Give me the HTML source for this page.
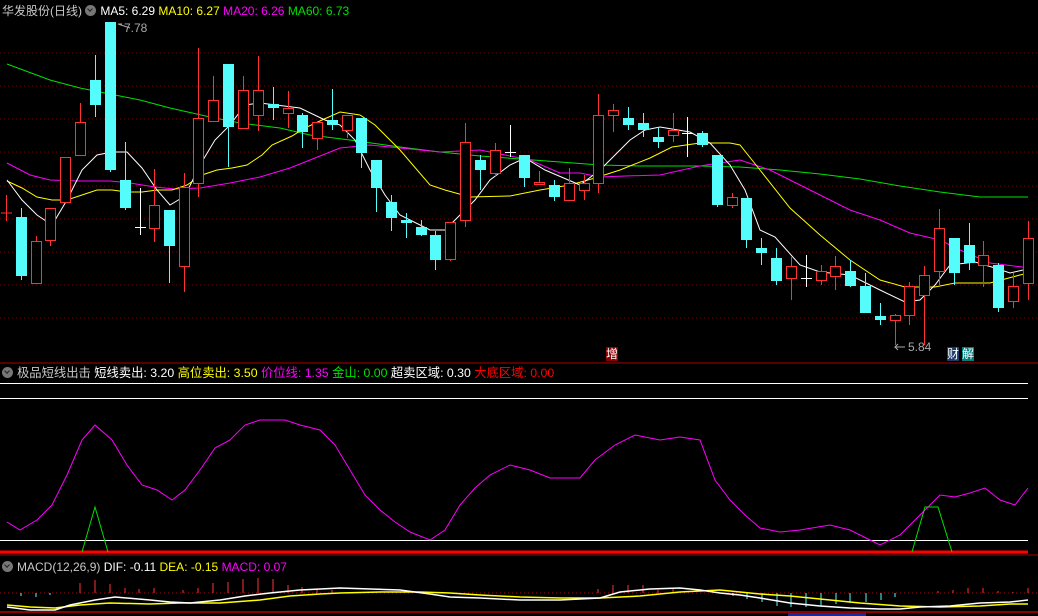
<!DOCTYPE html>
<html><head><meta charset="utf-8"><style>
html,body{margin:0;padding:0;background:#000;}
body{width:1038px;height:616px;overflow:hidden;position:relative;font-family:"Liberation Sans","Noto Sans CJK SC",sans-serif;}
.t{position:absolute;font-size:12px;line-height:14px;white-space:nowrap;}
.ic{display:inline-block;width:11px;height:11px;border-radius:50%;background:#777;vertical-align:-1px;margin-right:4px;position:relative}
.ic:after{content:"";position:absolute;left:3px;top:2px;width:3px;height:3px;border-right:1.5px solid #222;border-bottom:1.5px solid #222;transform:rotate(45deg)}
</style></head><body>
<svg width="1038" height="616" style="position:absolute;left:0;top:0" xmlns="http://www.w3.org/2000/svg">
<g stroke="#7a0000" stroke-dasharray="1,3" stroke-width="1">
<line x1="0" y1="53" x2="1038" y2="53"/><line x1="0" y1="86" x2="1038" y2="86"/><line x1="0" y1="119" x2="1038" y2="119"/><line x1="0" y1="152" x2="1038" y2="152"/><line x1="0" y1="186" x2="1038" y2="186"/><line x1="0" y1="219" x2="1038" y2="219"/><line x1="0" y1="252" x2="1038" y2="252"/><line x1="0" y1="285" x2="1038" y2="285"/><line x1="0" y1="318" x2="1038" y2="318"/>
<line x1="0" y1="593" x2="1038" y2="593" stroke="#b00000"/>
</g>
<line x1="0" y1="363" x2="1038" y2="363" stroke="#b00000"/>
<line x1="0" y1="555" x2="1038" y2="555" stroke="#b00000"/>
<line x1="0" y1="612" x2="1038" y2="612" stroke="#c00000" stroke-width="1.5"/>
<g fill="none" stroke-width="1">
<polyline stroke="#00e000" points="7,64 50,80 80,88 140,100 170,108 210,117 240,123 280,128 310,135 350,140 400,147 440,152 480,156 520,159 560,162 600,165 640,166 700,166 740,167 780,170 820,174 860,179 900,186 940,192 980,197 1028,197"/>
<polyline stroke="#ff00ff" points="7,163 30,175 50,180 80,181 110,181 130,183 155,187 175,189 200,188 230,183 260,177 290,168 310,160 340,148 370,145 420,150 440,152 480,150 530,160 560,173 580,173 600,177 625,176 660,175 700,166 740,160 770,170 800,185 830,200 850,210 880,220 910,233 940,240 960,250 990,263 1030,268"/>
<polyline stroke="#ffff00" points="7,181 22,188 37,197 52,200 67,200 82,195 97,190 112,190 127,192 142,192 157,190 172,190 187,185 202,175 217,170 232,168 247,165 262,155 272,145 292,136 305,128 322,120 340,112 360,115 375,125 400,150 430,185 445,190 470,197 510,196 540,190 570,185 595,178 620,170 650,158 672,147 700,143 730,143 740,145 760,170 790,208 820,235 850,260 880,280 905,287 935,287 955,283 990,283 1020,275 1028,273"/>
<polyline stroke="#ffffff" points="7,180 22,200 37,215 52,225 67,200 82,170 97,155 112,152 127,152 142,168 157,190 170,205 185,196 200,165 215,140 230,125 245,105 260,103 300,108 325,120 340,125 355,140 370,170 385,195 400,215 430,230 445,230 460,215 475,200 490,180 510,165 525,158 545,170 580,185 600,170 615,155 630,140 645,130 660,127 690,132 710,143 730,165 745,190 760,230 775,237 800,265 820,272 850,275 880,290 905,302 920,300 935,285 950,265 975,262 995,268 1010,273 1023,270"/>
</g>
<g stroke-width="1">
<g stroke="#ff3232" fill="#000">
<line x1="6.5" y1="195" x2="6.5" y2="221"/><line x1="1" y1="213" x2="12" y2="213"/>
<line x1="36.5" y1="236" x2="36.5" y2="283"/><rect x="31.5" y="241.5" width="10" height="42"/>
<line x1="50.5" y1="240" x2="50.5" y2="246"/><rect x="45.5" y="208.5" width="10" height="32"/>
<rect x="60.5" y="157.5" width="10" height="45"/>
<line x1="80.5" y1="103" x2="80.5" y2="155"/><rect x="75.5" y="122.5" width="10" height="33"/>
<line x1="154.5" y1="169" x2="154.5" y2="242"/><rect x="149.5" y="205.5" width="10" height="23"/>
<line x1="184.5" y1="173" x2="184.5" y2="292"/><rect x="179.5" y="187.5" width="10" height="79"/>
<line x1="198.5" y1="48" x2="198.5" y2="197"/><rect x="193.5" y="118.5" width="10" height="65"/>
<line x1="213.5" y1="76" x2="213.5" y2="100"/><rect x="208.5" y="100.5" width="10" height="21"/>
<line x1="243.5" y1="76" x2="243.5" y2="128"/><rect x="238.5" y="90.5" width="10" height="38"/>
<line x1="258.5" y1="56" x2="258.5" y2="131"/><rect x="253.5" y="90.5" width="10" height="25"/>
<line x1="288.5" y1="91" x2="288.5" y2="128"/><rect x="283.5" y="108.5" width="10" height="5"/>
<line x1="317.5" y1="122" x2="317.5" y2="150"/><rect x="312.5" y="122.5" width="10" height="16"/>
<line x1="347.5" y1="115" x2="347.5" y2="138"/><rect x="342.5" y="115.5" width="10" height="15"/>
<line x1="450.5" y1="259" x2="450.5" y2="261"/><rect x="445.5" y="222.5" width="10" height="37"/>
<line x1="465.5" y1="123" x2="465.5" y2="227"/><rect x="460.5" y="142.5" width="10" height="78"/>
<line x1="495.5" y1="143" x2="495.5" y2="177"/><rect x="490.5" y="150.5" width="10" height="23"/>
<line x1="539.5" y1="171" x2="539.5" y2="184"/><rect x="534.5" y="182.5" width="10" height="2"/>
<line x1="569.5" y1="168" x2="569.5" y2="201"/><rect x="564.5" y="183.5" width="10" height="17"/>
<line x1="584.5" y1="175" x2="584.5" y2="200"/><rect x="579.5" y="183.5" width="10" height="7"/>
<line x1="598.5" y1="94" x2="598.5" y2="193"/><rect x="593.5" y="115.5" width="10" height="68"/>
<line x1="613.5" y1="104" x2="613.5" y2="132"/><rect x="608.5" y="110.5" width="10" height="5"/>
<line x1="673.5" y1="113" x2="673.5" y2="142"/><rect x="668.5" y="130.5" width="10" height="5"/>
<line x1="732.5" y1="193" x2="732.5" y2="208"/><rect x="727.5" y="197.5" width="10" height="8"/>
<line x1="791.5" y1="257" x2="791.5" y2="300"/><rect x="786.5" y="266.5" width="10" height="12"/>
<line x1="821.5" y1="265" x2="821.5" y2="285"/><rect x="816.5" y="271.5" width="10" height="9"/>
<line x1="835.5" y1="256" x2="835.5" y2="290"/><rect x="830.5" y="266.5" width="10" height="10"/>
<line x1="895.5" y1="314" x2="895.5" y2="345"/><rect x="890.5" y="315.5" width="10" height="5"/>
<line x1="909.5" y1="282" x2="909.5" y2="325"/><rect x="904.5" y="286.5" width="10" height="29"/>
<line x1="924.5" y1="266" x2="924.5" y2="345"/><rect x="919.5" y="275.5" width="10" height="20"/>
<line x1="939.5" y1="209" x2="939.5" y2="285"/><rect x="934.5" y="228.5" width="10" height="43"/>
<line x1="983.5" y1="241" x2="983.5" y2="287"/><rect x="978.5" y="255.5" width="10" height="10"/>
<line x1="1013.5" y1="273" x2="1013.5" y2="308"/><rect x="1008.5" y="286.5" width="10" height="15"/>
<line x1="1028.5" y1="221" x2="1028.5" y2="300"/><rect x="1023.5" y="238.5" width="10" height="45"/>
</g>
<g stroke="#54fcfc" fill="#54fcfc">
<line x1="21.5" y1="208" x2="21.5" y2="280"/><rect x="16.5" y="217.5" width="10" height="58"/>
<line x1="95.5" y1="55" x2="95.5" y2="117"/><rect x="90.5" y="80.5" width="10" height="24"/>
<line x1="110.5" y1="22" x2="110.5" y2="172"/><rect x="105.5" y="22.5" width="10" height="147"/>
<line x1="125.5" y1="142" x2="125.5" y2="210"/><rect x="120.5" y="180.5" width="10" height="27"/>
<line x1="169.5" y1="210" x2="169.5" y2="283"/><rect x="164.5" y="210.5" width="10" height="35"/>
<line x1="228.5" y1="64" x2="228.5" y2="167"/><rect x="223.5" y="64.5" width="10" height="62"/>
<line x1="273.5" y1="87" x2="273.5" y2="120"/><rect x="268.5" y="104.5" width="10" height="3"/>
<line x1="302.5" y1="113" x2="302.5" y2="148"/><rect x="297.5" y="115.5" width="10" height="16"/>
<line x1="332.5" y1="89" x2="332.5" y2="130"/><rect x="327.5" y="120.5" width="10" height="4"/>
<line x1="361.5" y1="118" x2="361.5" y2="168"/><rect x="356.5" y="118.5" width="10" height="34"/>
<line x1="376.5" y1="160" x2="376.5" y2="212"/><rect x="371.5" y="160.5" width="10" height="27"/>
<line x1="391.5" y1="195" x2="391.5" y2="231"/><rect x="386.5" y="202.5" width="10" height="15"/>
<line x1="406.5" y1="213" x2="406.5" y2="238"/><rect x="401.5" y="220.5" width="10" height="2"/>
<line x1="421.5" y1="220" x2="421.5" y2="236"/><rect x="416.5" y="227.5" width="10" height="7"/>
<line x1="435.5" y1="231" x2="435.5" y2="270"/><rect x="430.5" y="235.5" width="10" height="24"/>
<line x1="480.5" y1="155" x2="480.5" y2="190"/><rect x="475.5" y="160.5" width="10" height="9"/>
<line x1="524.5" y1="155" x2="524.5" y2="187"/><rect x="519.5" y="155.5" width="10" height="22"/>
<line x1="554.5" y1="180" x2="554.5" y2="201"/><rect x="549.5" y="185.5" width="10" height="11"/>
<line x1="628.5" y1="107" x2="628.5" y2="130"/><rect x="623.5" y="118.5" width="10" height="6"/>
<line x1="643.5" y1="113" x2="643.5" y2="137"/><rect x="638.5" y="123.5" width="10" height="6"/>
<line x1="658.5" y1="128" x2="658.5" y2="148"/><rect x="653.5" y="137.5" width="10" height="4"/>
<line x1="702.5" y1="131" x2="702.5" y2="147"/><rect x="697.5" y="133.5" width="10" height="11"/>
<line x1="717.5" y1="155" x2="717.5" y2="207"/><rect x="712.5" y="155.5" width="10" height="49"/>
<line x1="746.5" y1="198" x2="746.5" y2="248"/><rect x="741.5" y="198.5" width="10" height="41"/>
<line x1="761.5" y1="238" x2="761.5" y2="265"/><rect x="756.5" y="248.5" width="10" height="4"/>
<line x1="776.5" y1="248" x2="776.5" y2="285"/><rect x="771.5" y="258.5" width="10" height="22"/>
<line x1="850.5" y1="260" x2="850.5" y2="287"/><rect x="845.5" y="271.5" width="10" height="14"/>
<line x1="865.5" y1="273" x2="865.5" y2="313"/><rect x="860.5" y="286.5" width="10" height="26"/>
<line x1="880.5" y1="303" x2="880.5" y2="325"/><rect x="875.5" y="316.5" width="10" height="3"/>
<line x1="954.5" y1="238" x2="954.5" y2="285"/><rect x="949.5" y="238.5" width="10" height="34"/>
<line x1="969.5" y1="223" x2="969.5" y2="270"/><rect x="964.5" y="245.5" width="10" height="17"/>
<line x1="998.5" y1="263" x2="998.5" y2="312"/><rect x="993.5" y="265.5" width="10" height="42"/>
</g>
<g stroke="#fff">
<line x1="140.5" y1="188" x2="140.5" y2="235"/><line x1="135" y1="227.5" x2="146" y2="227.5"/>
<line x1="510.5" y1="125" x2="510.5" y2="157"/><line x1="505" y1="152.5" x2="516" y2="152.5"/>
<line x1="687.5" y1="117" x2="687.5" y2="157"/><line x1="682" y1="133.5" x2="693" y2="133.5"/>
<line x1="806.5" y1="255" x2="806.5" y2="287"/><line x1="801" y1="278.5" x2="812" y2="278.5"/>
</g>
</g>
<g stroke="#aaa" fill="none"><polyline points="130,28 118,24 122,24"/><polyline points="905,347 895,347 898,344 895,347 898,350"/></g>
<line x1="0" y1="383.5" x2="1028" y2="383.5" stroke="#fff"/>
<line x1="0" y1="398.5" x2="1028" y2="398.5" stroke="#fff"/>
<line x1="0" y1="540.5" x2="1028" y2="540.5" stroke="#fff"/>
<line x1="0" y1="552" x2="1028" y2="552" stroke="#ff0000" stroke-width="3"/>
<polyline fill="none" stroke="#ff00ff" points="7,522 20,530 37,520 52,505 67,475 82,440 95,425 112,440 127,465 142,485 157,490 172,500 185,490 200,470 215,448 230,440 245,425 260,420 285,420 300,425 320,430 335,445 350,470 365,495 380,510 395,522 410,532 430,540 445,530 460,505 475,488 490,475 510,465 530,470 550,478 580,478 595,460 615,445 635,435 660,440 680,437 700,440 715,480 730,500 745,515 760,528 780,532 800,530 830,525 850,530 870,540 880,545 900,535 920,515 940,495 955,497 970,493 985,488 1000,500 1015,505 1028,488"/>
<g fill="none" stroke="#00e000"><polyline points="82,552 95,507 108,552"/><polyline points="912,552 925,507 938,507 952,552"/></g>
<g stroke="#ff3232">
<line x1="80" y1="593" x2="80" y2="583"/><line x1="95" y1="593" x2="95" y2="580"/><line x1="110" y1="593" x2="110" y2="584"/><line x1="125" y1="593" x2="125" y2="588"/><line x1="139" y1="593" x2="139" y2="589"/><line x1="154" y1="593" x2="154" y2="588"/><line x1="183" y1="593" x2="183" y2="590"/><line x1="198" y1="593" x2="198" y2="588"/><line x1="213" y1="593" x2="213" y2="583"/><line x1="228" y1="593" x2="228" y2="582"/><line x1="243" y1="593" x2="243" y2="579"/><line x1="258" y1="593" x2="258" y2="578"/><line x1="273" y1="593" x2="273" y2="579"/><line x1="288" y1="593" x2="288" y2="585"/><line x1="302" y1="593" x2="302" y2="587"/><line x1="317" y1="593" x2="317" y2="589"/><line x1="332" y1="593" x2="332" y2="590"/><line x1="598" y1="593" x2="598" y2="589"/><line x1="613" y1="593" x2="613" y2="585"/><line x1="628" y1="593" x2="628" y2="585"/><line x1="643" y1="593" x2="643" y2="585"/><line x1="658" y1="593" x2="658" y2="590"/><line x1="673" y1="593" x2="673" y2="589"/><line x1="938" y1="593" x2="938" y2="591"/><line x1="953" y1="593" x2="953" y2="590"/><line x1="968" y1="593" x2="968" y2="588"/><line x1="983" y1="593" x2="983" y2="588"/><line x1="998" y1="593" x2="998" y2="591"/><line x1="1013" y1="593" x2="1013" y2="592"/><line x1="1028" y1="593" x2="1028" y2="588"/>
</g>
<g stroke="#54fcfc">
<line x1="21" y1="593" x2="21" y2="596"/><line x1="36" y1="593" x2="36" y2="597"/><line x1="50" y1="593" x2="50" y2="595"/><line x1="733" y1="593" x2="733" y2="596"/><line x1="747" y1="593" x2="747" y2="599"/><line x1="762" y1="593" x2="762" y2="602"/><line x1="777" y1="593" x2="777" y2="606"/><line x1="791" y1="593" x2="791" y2="607"/><line x1="806" y1="593" x2="806" y2="607"/><line x1="821" y1="593" x2="821" y2="606"/><line x1="836" y1="593" x2="836" y2="604"/><line x1="850" y1="593" x2="850" y2="603"/><line x1="866" y1="593" x2="866" y2="602"/><line x1="881" y1="593" x2="881" y2="600"/><line x1="895" y1="593" x2="895" y2="597"/>
</g>
<polyline fill="none" stroke="#ffff00" stroke-width="1.5" points="7,605 30,607 55,608 80,605 110,603 150,604 180,603 220,603 260,600 290,596 320,594 340,593 380,592 420,592 450,593 480,595 520,597 560,598 600,598 640,596 680,592 720,590 760,594 790,596 830,600 860,603 900,606 940,607 980,606 1010,604 1028,604"/>
<polyline fill="none" stroke="#ffffff" stroke-width="1.5" points="7,607 30,610 55,610 70,605 95,600 115,597 150,600 170,602 190,603 220,600 245,596 270,593 300,590 340,588 400,590 430,594 450,597 480,598 520,600 560,600 600,598 620,592 650,589 680,588 700,590 720,593 740,595 760,598 790,603 820,606 850,608 880,609 900,609 920,607 950,606 980,603 1010,602 1028,600"/>
<rect x="788" y="613" width="78" height="3" fill="#1a2a9a"/>
</svg>
<div class="t" style="left:2px;top:4px;color:#c8c8c8;font-size:12px">华发股份(日线) <span class="ic"></span><span style="color:#fff">MA5: 6.29</span> <span style="color:#ffff00">MA10: 6.27</span> <span style="color:#ff00ff">MA20: 6.26</span> <span style="color:#00e000">MA60: 6.73</span></div>
<div class="t" style="left:124px;top:21px;color:#aaa">7.78</div>
<div class="t" style="left:908px;top:340px;color:#aaa">5.84</div>
<div class="t" style="left:606px;top:347px;color:#fff;background:#8a0000">增</div>
<div class="t" style="left:947px;top:347px;color:#fff;background:#1a3a6a">财</div>
<div class="t" style="left:962px;top:347px;color:#fff;background:#007a7a">解</div>
<div class="t" style="left:2px;top:366px;color:#c8c8c8;font-size:12.3px"><span class="ic"></span>极品短线出击 <span style="color:#fff">短线卖出: 3.20</span> <span style="color:#ffff00">高位卖出: 3.50</span> <span style="color:#ff00ff">价位线: 1.35</span> <span style="color:#00e000">金山: 0.00</span> <span style="color:#fff">超卖区域: 0.30</span> <span style="color:#ff0000">大底区域: 0.00</span></div>
<div class="t" style="left:2px;top:560px;color:#c8c8c8"><span class="ic"></span>MACD(12,26,9) <span style="color:#fff">DIF: -0.11</span> <span style="color:#ffff00">DEA: -0.15</span> <span style="color:#ff00ff">MACD: 0.07</span></div>
</body></html>
